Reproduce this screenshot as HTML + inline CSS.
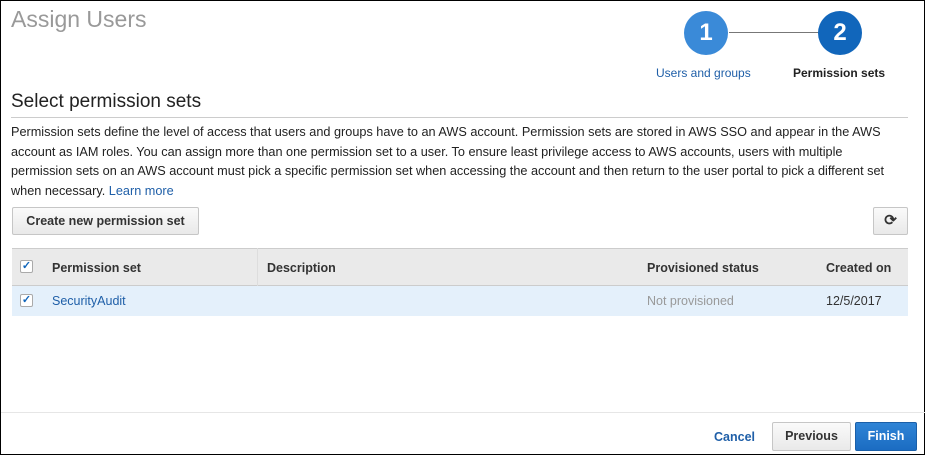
<!DOCTYPE html>
<html><head><style>
*{box-sizing:border-box;margin:0;padding:0}
body{width:925px;height:455px;overflow:hidden;background:#fff;font-family:"Liberation Sans",Arial,sans-serif;position:relative;border:1px solid #000}
.a{position:absolute}
.circ{position:absolute;width:44px;height:44px;border-radius:50%;color:#fff;font-weight:bold;font-size:24px;text-align:center;line-height:44px}
.btn{position:absolute;border:1px solid #c6c6c6;border-radius:2px;background:linear-gradient(#fafafa,#e9e9e9);font-size:12.5px;font-weight:bold;color:#333;text-align:center}
.cb{position:absolute;width:13px;height:13px;border:1px solid #aaa;border-radius:2px;background:#fff;color:#1166bb;font-size:11px;line-height:11px;text-align:center;font-weight:bold}
</style></head><body>
<div class="a" style="left:10px;top:5px;font-size:23px;color:#999">Assign Users</div>
<div class="a" style="left:728px;top:31px;width:90px;height:1px;background:#777"></div>
<div class="circ" style="left:683px;top:10px;background:#3a8ad8">1</div>
<div class="circ" style="left:817px;top:10px;background:#1166bb">2</div>
<div class="a" style="left:655px;top:65px;font-size:12px;color:#1f5fa8">Users and groups</div>
<div class="a" style="left:792px;top:65px;font-size:12px;font-weight:bold;color:#222">Permission sets</div>
<div class="a" style="left:10px;top:90px;font-size:19px;color:#222">Select permission sets</div>
<div class="a" style="left:10px;top:116px;width:897px;height:1px;background:#ccc"></div>
<div class="a" style="left:10px;top:122px;width:896px;font-size:12.7px;line-height:19.5px;color:#222">Permission sets define the level of access that users and groups have to an AWS account. Permission sets are stored in AWS SSO and appear in the AWS account as IAM roles. You can assign more than one permission set to a user. To ensure least privilege access to AWS accounts, users with multiple permission sets on an AWS account must pick a specific permission set when accessing the account and then return to the user portal to pick a different set when necessary. <span style="color:#1f5fa8">Learn more</span></div>
<div class="btn" style="left:11px;top:206px;width:187px;height:28px;line-height:26px">Create new permission set</div>
<div class="btn" style="left:872px;top:206px;width:35px;height:28px;line-height:26px;font-size:15px">⟳</div>
<div class="a" style="left:11px;top:247px;width:896px;height:38px;background:#eaeaea;border-top:1px solid #ccc;border-bottom:1px solid #ccc"></div>
<div class="a" style="left:11px;top:285px;width:896px;height:30px;background:#e4f0fb"></div>
<div class="cb" style="left:19px;top:259px">✓</div>
<div class="cb" style="left:19px;top:293px">✓</div>
<div class="a" style="left:51px;top:260px;font-size:12.5px;font-weight:bold;color:#333">Permission set</div>
<div class="a" style="left:256px;top:247px;width:1px;height:38px;background:#ddd"></div>
<div class="a" style="left:266px;top:260px;font-size:12.5px;font-weight:bold;color:#333">Description</div>
<div class="a" style="left:646px;top:260px;font-size:12.5px;font-weight:bold;color:#333">Provisioned status</div>
<div class="a" style="left:825px;top:260px;font-size:12.5px;font-weight:bold;color:#333">Created on</div>
<div class="a" style="left:51px;top:293px;font-size:12.5px;color:#1f5fa8">SecurityAudit</div>
<div class="a" style="left:646px;top:293px;font-size:12.5px;color:#999">Not provisioned</div>
<div class="a" style="left:825px;top:293px;font-size:12.5px;color:#333">12/5/2017</div>
<div class="a" style="left:0;top:411px;width:925px;height:1px;background:#e6e6e6"></div>
<div class="a" style="left:713px;top:429px;font-size:12.5px;font-weight:bold;color:#1f5fa8">Cancel</div>
<div class="btn" style="left:771px;top:421px;width:79px;height:29px;line-height:27px">Previous</div>
<div class="btn" style="left:854px;top:421px;width:62px;height:29px;line-height:27px;background:linear-gradient(#2f84d6,#1b6cc2);border-color:#1a5fa8;color:#fff">Finish</div>
</body></html>
